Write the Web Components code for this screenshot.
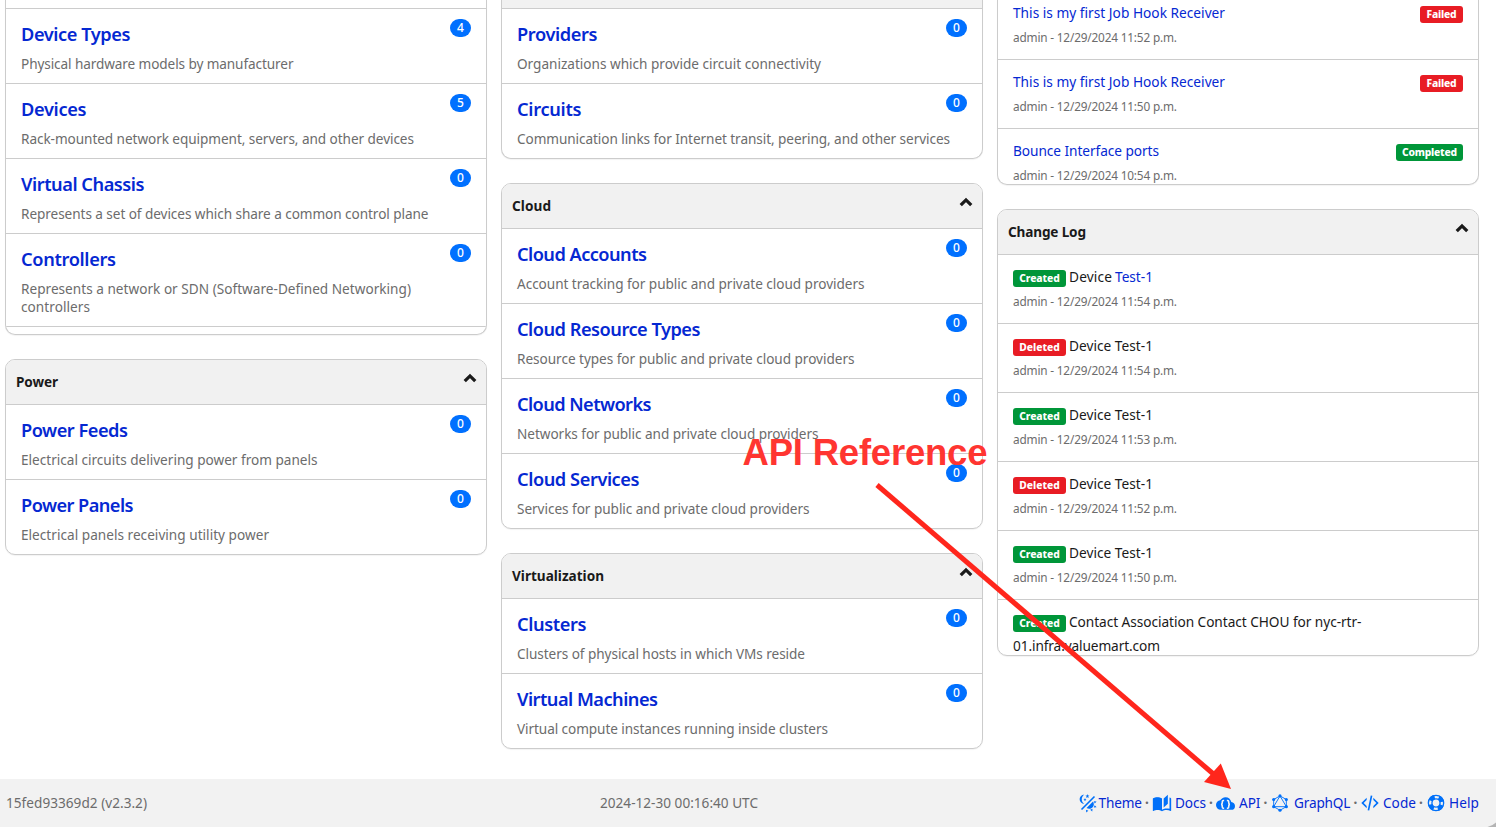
<!DOCTYPE html>
<html lang="en">
<head>
<meta charset="utf-8">
<title>Nautobot</title>
<style>
html,body{margin:0;height:827px;overflow:hidden;background:#fff}
body{font-family:"Noto Sans","Open Sans",sans-serif;font-size:14px;color:#1a1a1a}
</style>
</head>
<body>
<nb-page></nb-page>
<script>
const make=(name,html,init)=>customElements.define(name,class extends HTMLElement{
  constructor(){super();this.attachShadow({mode:'open'}).innerHTML=html}
  connectedCallback(){if(init)init(this,this.shadowRoot)}
});

/* Footer and header glyphs, 24-unit grid */
const ICONS={
  up:'<path d="M3 17.500 12 8.500l9 9" fill="none" stroke="currentColor" stroke-width="5.600"/>',
  theme:'<path d="M7.500 2C5.700 3.200 4.500 5.200 4.500 7.500s1.200 4.300 3 5.500C4.500 13 2 10.500 2 7.500S4.500 2 7.500 2M19.100 3.500l1.400 1.400L4.900 20.500l-1.400-1.400L19.100 3.500M12.900 5.900 11.400 5 9.900 6l.4-1.700L8.900 3.100l1.800-.1.600-1.700.7 1.700 1.700.1-1.400 1.100.6 1.700M9.600 9.500 8.400 8.800l-1.200.8.400-1.400L6.500 7.300 7.900 7.200l.5-1.300.5 1.300 1.300.1-1.100.9.500 1.300M19 13.500c0 3-2.500 5.500-5.500 5.500-1.200 0-2.300-.4-3.200-1l7.700-7.700c.6.900 1 2 1 3.200M14.600 20.100l2.800-1.200-.3 3.400-2.500-2.200m4.300-2.700 1.200-2.800 2.200 2.600-3.400.2m1.200-4.700-1.200-2.800 3.400.3-2.200 2.500M9.600 20.100l2.800 1.100-2.500 2.200-.3-3.300"/>',
  docs:'<path d="M19 2l-5 4.500v11l5-4.500V2M6.500 5C4.550 5 2.450 5.400 1 6.500v14.660c0 .25.250.5.500.5.100 0 .150-.070.250-.070 1.350-.65 3.300-1.090 4.750-1.090 1.950 0 4.050.4 5.500 1.500 1.350-.85 3.800-1.500 5.500-1.500 1.650 0 3.350.310 4.750 1.060.1.050.150.030.250.030.250 0 .5-.25.5-.5V6.500c-.6-.45-1.250-.75-2-1V19c-1.100-.35-2.300-.5-3.500-.5-1.700 0-4.150.65-5.500 1.500V6.500C10.550 5.400 8.450 5 6.500 5z"/><path d="M1.500 6.500c3-1.200 7-1.200 10.300.3v13.400c-3.300-1.500-7-1.500-10.300-.3z"/>',
  api:'<path d="M19.350 10.040C18.670 6.590 15.640 4 12 4 9.110 4 6.600 5.640 5.350 8.040 2.340 8.360 0 10.910 0 14a6 6 0 0 0 6 6h13a5 5 0 0 0 5-5c0-2.640-2.050-4.780-4.650-4.960"/><path d="M10.300 8.300H9.400c-.9 0-1.500.6-1.500 1.500v1.700c0 1-.6 1.600-1.600 1.600 1 0 1.600.6 1.600 1.600v1.700c0 .9.6 1.500 1.500 1.500h.9M13.700 8.300h.9c.9 0 1.500.6 1.500 1.500v1.700c0 1 .6 1.600 1.600 1.600-1 0-1.600.6-1.600 1.600v1.700c0 .9-.6 1.500-1.500 1.500h-.9" fill="none" stroke="#f2f2f2" stroke-width="2"/>',
  graphql:'<path d="M12 3.500 19.600 7.800v8.600L12 20.700l-7.600-4.300V7.800zM12 3.500 4.400 16.400h15.200z" fill="none" stroke="currentColor" stroke-width="1.100"/><g><circle cx="12" cy="3.500" r="1.900"/><circle cx="19.600" cy="7.800" r="1.900"/><circle cx="19.600" cy="16.400" r="1.900"/><circle cx="12" cy="20.700" r="1.900"/><circle cx="4.400" cy="16.400" r="1.900"/><circle cx="4.400" cy="7.800" r="1.900"/></g>',
  code:'<path d="M12.890 3l1.960.4L11.110 21l-1.960-.4L12.890 3m6.700 9L16 8.410V5.580L22.420 12 16 18.410v-2.830L19.590 12M1.580 12 8 5.580v2.830L4.410 12 8 15.580v2.830L1.580 12z"/>',
  help:'<g fill="none" stroke="currentColor"><circle cx="12" cy="12" r="9.200" stroke-width="1.600"/><circle cx="12" cy="12" r="4.900" stroke-width="1.600"/><circle cx="12" cy="12" r="7.200" stroke-width="5" stroke-dasharray="6.300 5.010" stroke-dashoffset="-2.500"/></g>'
};
make('nb-icon','<style>:host{display:block;flex:none;color:#0070f9}svg{display:block;width:100%;height:100%;fill:currentColor}</style><svg viewBox="0 0 24 24"></svg>',
  (el,r)=>{r.querySelector('svg').innerHTML=ICONS[el.getAttribute('name')]});

make('nb-count','<style>:host{display:block;width:21px;height:18px;border-radius:9px;background:#0070ff;color:#fff;font-size:12px;font-weight:500;line-height:18px;text-align:center}</style><slot></slot>');

make('nb-badge',`<style>
:host{display:inline-flex;justify-content:center;width:53px;height:17px;border-radius:3px;background:#009639;color:#fff;font-size:10.300px;font-weight:800;line-height:17px}
:host([kind=bad]){background:#e81c24}
</style><slot></slot>`);

make('nb-item',`<style>
:host{display:block;box-sizing:border-box;height:75px;border-top:1px solid #ccc;padding:10px 15px 0}
:host([tall]){height:93px}
.top{display:flex;justify-content:space-between;height:32px}
.t{color:#0528d2;font-size:18.200px;font-weight:600;line-height:31px;white-space:nowrap}
.d{color:#6c6c6c;font-size:13.600px;line-height:18px;padding-top:4px}
nb-count{margin-top:0}
</style><div class="top"><span class="t"><slot name="title"></slot></span><nb-count></nb-count></div><div class="d"><slot></slot></div>`,
  (el,r)=>{r.querySelector('nb-count').textContent=el.getAttribute('count')||'0'});

make('nb-log',`<style>
:host{display:block;box-sizing:border-box;height:69px;border-top:1px solid #ccc;padding:10px 15px 0}
.l{display:flex;justify-content:space-between;font-size:13.700px;line-height:24px;white-space:nowrap}
.m{color:#6c6c6c;font-size:11.800px;line-height:20px;padding-top:2px}
::slotted([slot=status]){margin-top:5px}
</style><div class="l"><div><slot></slot></div><slot name="status"></slot></div><div class="m"><slot name="meta"></slot></div>`);

make('nb-panel',`<style>
:host{display:block;box-sizing:border-box;border:1px solid #ccc;border-radius:10px;overflow:hidden;background:#fff;box-shadow:0 1px 1px rgba(0,0,0,.05)}
:host([cut]){border-top:0;border-radius:0 0 10px 10px}
header{display:flex;justify-content:space-between;height:44px;background:#f1f1f1;padding:0 9.500px 0 10px;font-size:13.600px;font-weight:700;line-height:44px}
nb-icon{width:14px;height:14px;margin-top:11px;color:#1a1a1a}
:host([cut]) header{display:none}
</style><header><slot name="head"></slot><nb-icon name="up"></nb-icon></header><slot></slot>`);

make('nb-footer',`<style>
:host{display:grid;grid-template-columns:594px auto 1fr;align-items:center;box-sizing:border-box;height:48px;background:#f2f2f2;padding:0 17px 0 6px;color:#6c6c6c;font-size:13.600px;line-height:20px}
nav{display:flex;justify-content:flex-end;align-items:center}
.g{display:flex;align-items:center;height:20px;color:#0528d2}
.s{width:10px;text-align:center;font-weight:700}
</style>
<span><fit-text w="141">15fed93369d2 (v2.3.2)</fit-text></span>
<fit-text w="158">2024-12-30 00:16:40 UTC</fit-text>
<nav>
<span class="g"><nb-icon name="theme" style="width:20px;height:20px"></nb-icon><fit-text w="43.500">Theme</fit-text></span><span class="s">·</span>
<span class="g"><nb-icon name="docs" style="width:20px;height:20px;margin-right:3px"></nb-icon><fit-text w="31">Docs</fit-text></span><span class="s">·</span>
<span class="g"><nb-icon name="api" style="width:19px;height:19px;margin-right:4px"></nb-icon><fit-text w="21.500">API</fit-text></span><span class="s">·</span>
<span class="g"><nb-icon name="graphql" style="width:20px;height:20px;margin-right:3.500px"></nb-icon><fit-text w="56.500">GraphQL</fit-text></span><span class="s">·</span>
<span class="g"><nb-icon name="code" style="width:20px;height:20px;margin-right:2.500px"></nb-icon><fit-text w="33">Code</fit-text></span><span class="s">·</span>
<span class="g"><nb-icon name="help" style="width:20px;height:20px;margin-right:3px"></nb-icon><fit-text w="30">Help</fit-text></span>
</nav>`);

/* Callout drawn over the dashboard */
make('nb-callout',`<style>
:host{position:absolute;inset:0;pointer-events:none}
svg{position:absolute;inset:0;width:1496px;height:827px}
.t{position:absolute;left:742.500px;top:432px;font:700 36.500px/42px "Liberation Sans",Arial,sans-serif;color:#ff3531;white-space:nowrap}
</style><svg viewBox="0 0 1496 827"><path d="M877 485 1214 774.500" stroke="#ff261c" stroke-width="5"/><path d="M1231 789 1204 782 1220.800 763.500z" fill="#ff261c"/><path d="M1496 822.500V827h-8.500q5-1.200 8.500-4.500z" fill="#b4b4b4"/></svg><div class="t"><fit-text w="245">API Reference</fit-text></div>`);

const f=(w,t,a='')=>`<fit-text w="${w}" ${a}>${t}</fit-text>`;
const item=(t,tw,d,dw,n=0)=>`<nb-item count="${n}">${f(tw+.5,t,'slot="title"')}${f(dw,d)}</nb-item>`;
const head=(t,w)=>f(w,t,'slot="head"');
const job=(t,w,s,time,bad)=>`<nb-log>${f(w,t,'style="color:#0528d2"')}<nb-badge slot="status" ${bad?'kind="bad" style="width:43px"':'style="width:67px"'}>${f(bad?30:55,s)}</nb-badge>${f(164,'admin - 12/29/2024 '+time+' p.m.','slot="meta"')}</nb-log>`;
const chg=(s,time,body)=>`<nb-log><div class="r"><nb-badge ${s=='Deleted'?'kind="bad"':''}>${f(40.5,s)}</nb-badge>${body||f(84,'Device Test-1')}</div>${time?f(164,'admin - 12/29/2024 '+time+' p.m.','slot="meta"'):''}</nb-log>`;

make('nb-page',`<style>
:host{display:block;position:relative;width:1496px;height:827px;overflow:hidden}
main{display:grid;grid-template-columns:repeat(3,482px);column-gap:14px;align-items:start;height:779px;padding-left:5px;box-sizing:border-box;overflow:hidden}
.col{display:flex;flex-direction:column;gap:24px;min-width:0}
.r{display:flex;gap:3px}.r nb-badge{margin-top:5px;flex:none}
.strip{height:8px;background:#f1f1f1}.strip.w{background:#fff}
</style><main>
<div class="col">
<nb-panel cut style="height:335px"><div class="strip w"></div>
${item('Device Types',109,'Physical hardware models by manufacturer',272.5,4)}
${item('Devices',65,'Rack-mounted network equipment, servers, and other devices',393,5)}
${item('Virtual Chassis',123,'Represents a set of devices which share a common control plane',407.5)}
<nb-item tall>${f(95,'Controllers','slot="title"')}${f(390,'Represents a network or SDN (Software-Defined Networking)')}<br>${f(69,'controllers')}</nb-item>
<div style="border-top:1px solid #ccc"></div></nb-panel>
<nb-panel>${head('Power',42)}
${item('Power Feeds',106.5,'Electrical circuits delivering power from panels',296.5)}
${item('Power Panels',112,'Electrical panels receiving utility power',248)}</nb-panel>
</div>
<div class="col">
<nb-panel cut><div class="strip"></div>
${item('Providers',80,'Organizations which provide circuit connectivity',304)}
${item('Circuits',64,'Communication links for Internet transit, peering, and other services',433)}</nb-panel>
<nb-panel>${head('Cloud',39)}
${item('Cloud Accounts',129.5,'Account tracking for public and private cloud providers',347.5)}
${item('Cloud Resource Types',183,'Resource types for public and private cloud providers',337.5)}
${item('Cloud Networks',134,'Networks for public and private cloud providers',301.5)}
${item('Cloud Services',122,'Services for public and private cloud providers',292.5)}</nb-panel>
<nb-panel>${head('Virtualization',92)}
${item('Clusters',69,'Clusters of physical hosts in which VMs reside',288)}
${item('Virtual Machines',140.5,'Virtual compute instances running inside clusters',311)}</nb-panel>
</div>
<div class="col">
<nb-panel cut style="height:185px"><div style="margin-top:-10px">
${job('This is my first Job Hook Receiver',212,'Failed','11:52',1)}
${job('This is my first Job Hook Receiver',212,'Failed','11:50',1)}
${job('Bounce Interface ports',146,'Completed','10:54')}</div></nb-panel>
<nb-panel style="height:447px">${head('Change Log',78)}
${chg('Created','11:54',`<span>${f(43,'Device')}<span style="display:inline-block;width:3px"></span>${f(38,'Test-1','style="color:#0528d2"')}</span>`)}
${chg('Deleted','11:54')}${chg('Created','11:53')}${chg('Deleted','11:52')}${chg('Created','11:50')}
${chg('Created','',f(292.5,'Contact Association Contact CHOU for nyc-rtr-')).replace('</nb-log>',f(147,'01.infra.valuemart.com')+'</nb-log>')}</nb-panel>
</div>
</main><nb-footer></nb-footer><nb-callout></nb-callout>`);

/* Tracks its text so the run takes the given advance width */
make('fit-text','<style>:host{display:inline-block;white-space:nowrap}</style><slot></slot>',el=>{
  const n=el.textContent.length,w=+el.getAttribute('w'),now=el.getBoundingClientRect().width;
  const s=(w-now)/(n-1);
  el.style.letterSpacing=s+'px';el.style.marginRight=-s+'px';
});
</script>
</body>
</html>
